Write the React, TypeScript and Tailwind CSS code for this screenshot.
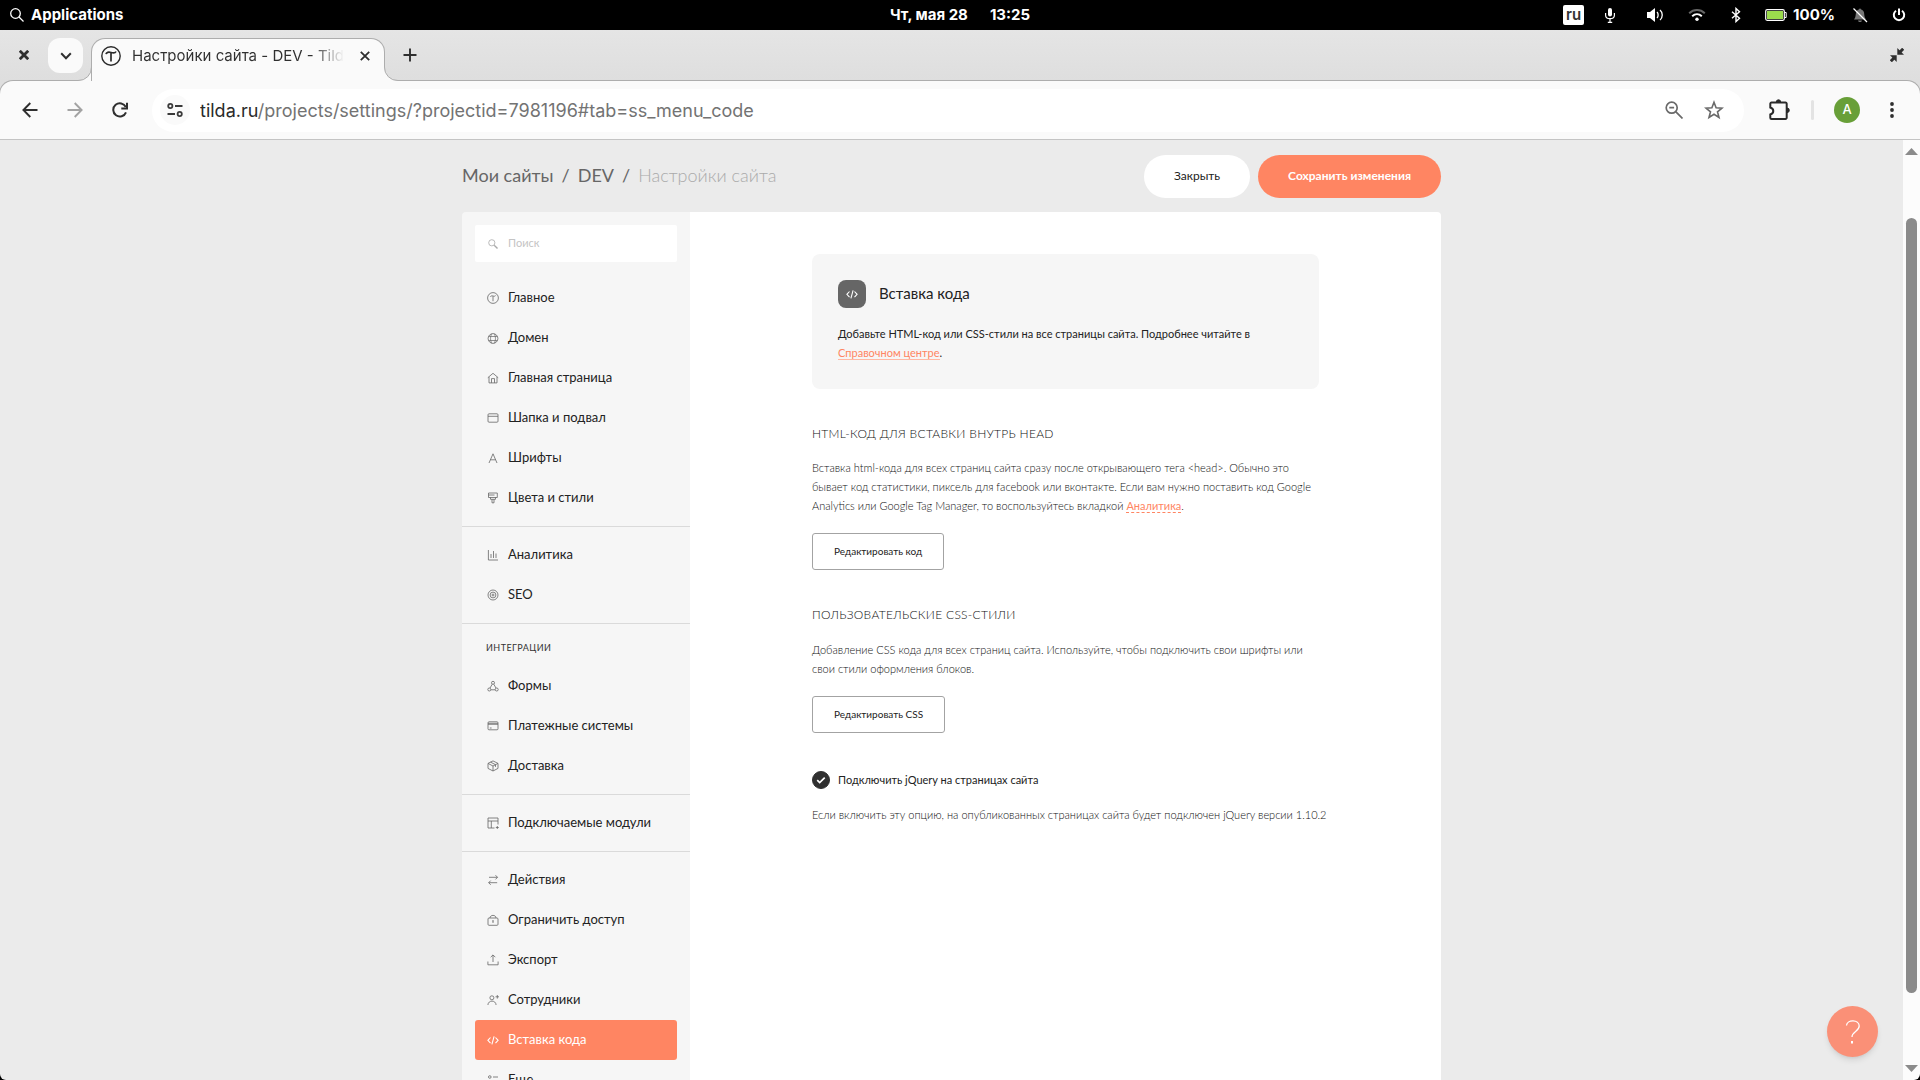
import type { ReactNode } from "react"
import clsx from "clsx"

type IconProps = { className?: string; children: ReactNode }

// Thin outline icons used by the settings menu, 12x12 grid
function MenuIcon({ className, children }: IconProps) {
  return (
    <svg viewBox="0 0 12 12" className={clsx("h-3 w-3 shrink-0", className)} fill="none" stroke="currentColor" strokeWidth="0.8" aria-hidden="true">
      {children}
    </svg>
  )
}

const codeShape = (
  <g strokeWidth="1.1">
    <path d="M3.5 3.500 .9 6.300l2.600 2.800M8.500 3.500l2.600 2.800-2.600 2.800" />
    <path d="M7.100 2.300 4.900 10.300" />
  </g>
)

const icons = {
  main: (
    <>
      <circle cx="6" cy="6" r="5.4" />
      <path d="M3.400 4.900c.3-1 1.300-1.300 2.600-.9s2.200.3 2.600-.5M6 4.200v5" />
    </>
  ),
  domain: (
    <>
      <circle cx="6" cy="6.500" r="4.900" />
      <path d="M4.500 1.900c-1.300 3-1.300 6.200 0 9.200M7.500 1.900c1.300 3 1.300 6.200 0 9.200M1.600 4.500h8.800M1.600 8.500h8.800" strokeWidth="0.700" />
    </>
  ),
  home: (
    <>
      <path d="M.8 5.700 6 1.300l5.200 4.400M2 5v5.900h8V5" />
      <path d="M4.500 10.900V6.600h3v4.300" />
    </>
  ),
  header: (
    <>
      <rect x="1" y="1.800" width="10" height="8.400" rx="1" />
      <path d="M1 4.300h10" />
    </>
  ),
  fonts: <path d="M2 11 6 1.800 10 11M3.500 7.800h5" />,
  colors: (
    <>
      <path d="M1.500 1h8.800v4.500H1.500zM1.500 3h6" />
      <path d="M3.500 5.500v1.800h5V5.500M5 7.300v3.500h2V7.300" />
    </>
  ),
  analytics: <path d="M1.400 1v10H11M4 9V5M6.500 9V2M9 9V4.500" />,
  seo: (
    <>
      <circle cx="6" cy="6" r="5" />
      <circle cx="6" cy="6" r="2.900" />
      <circle cx="6" cy="6" r="1" />
    </>
  ),
  forms: (
    <>
      <circle cx="6" cy="2.800" r="1.500" />
      <circle cx="2.300" cy="9.500" r="1.500" />
      <circle cx="9.700" cy="9.500" r="1.500" />
      <path d="M5.200 4.200 3 8.100M6.800 4.200 9 8.100M3.800 9.800h4.400" />
    </>
  ),
  payments: (
    <>
      <rect x="1" y="1.800" width="10" height="8" rx="1" />
      <path d="M1 3.300h10M1 4.300h10M2.800 8h1.800" />
    </>
  ),
  delivery: (
    <>
      <path d="M6 .9 11 3.400v5L6 11 1 8.400v-5zM1 3.400 6 6l5-2.600M6 6v5" />
      <path d="M3.500 2.100 8.500 4.700v2.200" />
    </>
  ),
  modules: (
    <>
      <path d="M11 7.500V1H1v10h6.500M1 4h10M4.300 4v7" />
      <path d="M10.300 9v3M8.800 10.500h3" />
    </>
  ),
  actions: <path d="M2 3.300h8.500M8.500 1.200l2 2.100-2 2.100M10.200 8.700H1.700M3.700 6.600l-2 2.100 2 2.100" />,
  access: (
    <>
      <rect x="1" y="4" width="10" height="7.300" rx="1" />
      <path d="M3 4c0-3.500 6-3.500 6 0M6 6.500v2.500M5.300 6.900h1.400" />
    </>
  ),
  exportSite: <path d="M.9 7.500v3.300h10.200V7.500M6 8V1M3.700 3.200 6 .9l2.300 2.300" />,
  staff: (
    <>
      <circle cx="4.900" cy="3.800" r="2" />
      <path d="M.9 11c.3-5.200 7.900-5.200 8.200 0M10.300 1v3.600M8.500 2.800h3.600" />
    </>
  ),
  code: codeShape,
  more: (
    <>
      <circle cx="2.800" cy="3" r="1.300" />
      <path d="M6 3h5M1 8.500h5" />
      <circle cx="9" cy="8.500" r="1.300" />
    </>
  ),
}

type MenuItem = { label: string; icon: keyof typeof icons; active?: boolean }
type MenuGroup = { title?: string; items: MenuItem[] }

const menu: MenuGroup[] = [
  {
    items: [
      { label: "Главное", icon: "main" },
      { label: "Домен", icon: "domain" },
      { label: "Главная страница", icon: "home" },
      { label: "Шапка и подвал", icon: "header" },
      { label: "Шрифты", icon: "fonts" },
      { label: "Цвета и стили", icon: "colors" },
    ],
  },
  {
    items: [
      { label: "Аналитика", icon: "analytics" },
      { label: "SEO", icon: "seo" },
    ],
  },
  {
    title: "Интеграции",
    items: [
      { label: "Формы", icon: "forms" },
      { label: "Платежные системы", icon: "payments" },
      { label: "Доставка", icon: "delivery" },
    ],
  },
  { items: [{ label: "Подключаемые модули", icon: "modules" }] },
  {
    items: [
      { label: "Действия", icon: "actions" },
      { label: "Ограничить доступ", icon: "access" },
      { label: "Экспорт", icon: "exportSite" },
      { label: "Сотрудники", icon: "staff" },
      { label: "Вставка кода", icon: "code", active: true },
      { label: "Еще", icon: "more" },
    ],
  },
]

function SystemBar() {
  return (
    <header className="grid h-[30px] shrink-0 grid-cols-[1fr_auto_1fr] items-center bg-black text-[15px] font-bold text-white">
      <button className="flex items-center gap-[7px] pl-[10px]">
        <svg viewBox="0 0 14 14" className="h-[14px] w-[14px]" fill="none" stroke="currentColor" strokeWidth="1.300" aria-hidden="true">
          <circle cx="5.500" cy="5.500" r="4.800" />
          <path d="m9 9 4.500 4.500" />
        </svg>
        Applications
      </button>
      <div className="flex gap-[22px]">
        <span>Чт, мая 28</span>
        <span>13:25</span>
      </div>
      <div className="flex items-center justify-end pr-[14px]">
        <span className="mr-[18px] flex h-5 w-[21px] items-center justify-center rounded-xs bg-white font-semibold text-[#333]">ru</span>
        <svg viewBox="0 0 16 16" className="mr-7 h-4 w-4" fill="none" stroke="white" aria-hidden="true">
          <rect x="6" y="1" width="4" height="8.500" rx="2" fill="white" stroke="none" />
          <path d="M3.600 6v2.200c0 4.600 8.800 4.600 8.800 0V6M8 11.500V15M5.800 15.300h4.400" strokeWidth="1.200" />
        </svg>
        <svg viewBox="0 0 18 16" className="mr-6 h-4 w-[18px]" fill="none" stroke="white" aria-hidden="true">
          <path d="M1 5h3l5-4v14l-5-4H1z" fill="white" stroke="none" />
          <path d="M11 5c1.500 1.500 1.500 4.500 0 6M14 3c3 2.500 3 7.500 0 10" strokeWidth="1.300" />
        </svg>
        <svg viewBox="0 0 18 16" className="mr-[22px] h-4 w-[18px]" fill="none" stroke="white" strokeWidth="2" aria-hidden="true">
          <path d="M1.200 6.200c4.500-4.200 11.100-4.200 15.600 0" opacity="0.400" />
          <path d="M4.200 9.200c2.800-2.500 6.800-2.500 9.600 0" />
          <circle cx="9" cy="12.300" r="1.700" fill="white" stroke="none" />
        </svg>
        <svg viewBox="0 0 16 16" className="mr-[21px] h-4 w-4" fill="none" stroke="white" strokeWidth="1.400" aria-hidden="true">
          <path d="m4 4.800 7.500 6.400L8 14.500v-13l3.500 3.300L4 11.200" />
        </svg>
        <svg viewBox="0 0 22 12" className="mr-[6px] h-3 w-[22px]" aria-hidden="true">
          <rect x="0.700" y="0.700" width="18.600" height="10.600" rx="1.500" fill="none" stroke="white" strokeWidth="1.200" />
          <rect x="2" y="2" width="16" height="8" fill="#9bdb4d" />
          <path d="M19.500 3.500h1.700v5h-1.700" fill="none" stroke="white" />
        </svg>
        <span>100%</span>
        <svg viewBox="0 0 16 16" className="ml-[17px] mr-6 h-4 w-4" aria-hidden="true">
          <path d="M2 12.500c2-2 1.500-5 2-7 .5-1.800 1.700-2.800 3-3 .2-1.500 1.800-1.500 2 0 1.300.2 2.500 1.200 3 3 .5 2 0 5 2 7zM6 13.500h4c-.5 2-3.500 2-4 0z" fill="#777" />
          <path d="M1.500 1.500 15 15" stroke="white" strokeWidth="1.300" />
        </svg>
        <svg viewBox="0 0 14 14" className="h-[14px] w-[14px]" fill="none" stroke="white" strokeWidth="2" aria-hidden="true">
          <path d="M4 2.700a5.200 5.200 0 1 0 6 0M7 .5v6.500" />
        </svg>
      </div>
    </header>
  )
}

function Cross({ bold }: { bold?: boolean }) {
  return (
    <svg viewBox="0 0 10 10" className="h-[10px] w-[10px]" stroke="#2f2f2f" strokeWidth={bold ? 2.8 : 1.8} aria-hidden="true">
      <path d="m.8.8 8.400 8.400M9.200.8.800 9.200" />
    </svg>
  )
}

function TabStrip() {
  return (
    <div className="flex h-[50px] shrink-0 bg-linear-to-b from-[#e5e5e5] to-[#dedede]">
      <button aria-label="Закрыть окно" className="flex w-12 items-center justify-center">
        <Cross bold />
      </button>
      <button aria-label="Поиск вкладок" className="mt-2 flex h-[35px] w-[35px] items-center justify-center rounded-xl bg-[#fafafa]">
        <svg viewBox="0 0 12 8" className="h-2 w-3" fill="none" stroke="#2f2f2f" strokeWidth="2" aria-hidden="true">
          <path d="m1.200 1.300 4.800 4.900 4.800-4.900" />
        </svg>
      </button>
      <div className="relative z-10 -mb-px -ml-[5px] flex items-end">
        <svg viewBox="0 0 14 14" className="-mr-px h-[14px] w-[14px]" aria-hidden="true">
          <path d="M0 13.500A13 13 0 0 0 13.500 0H14v14H0z" fill="#fafafa" />
          <path d="M0 13.500A13 13 0 0 0 13.500 0" fill="none" stroke="#adadad" />
        </svg>
        <div className="flex h-[43px] w-[294px] items-center rounded-t-[14px] border border-b-0 border-[#adadad] bg-[#fafafa] pb-2 pl-[9px] pr-[14px]">
          <svg viewBox="0 0 20 20" className="mr-[11px] h-5 w-5 shrink-0" fill="none" stroke="#2a2a2a" aria-hidden="true">
            <circle cx="10" cy="10" r="9.200" strokeWidth="1.400" />
            <path d="M5 8.200c.4-2 2.600-2.400 5-1.700s4.300.6 5-1M10 6.700v8.800" strokeWidth="1.700" />
          </svg>
          <span className="w-[212px] overflow-hidden whitespace-nowrap bg-linear-to-r from-[#2f2f2f] from-85% to-transparent bg-clip-text text-[15px] text-transparent">
            Настройки сайта - DEV - Tilda
          </span>
          <button aria-label="Закрыть вкладку" className="ml-auto">
            <Cross />
          </button>
        </div>
        <svg viewBox="0 0 14 14" className="-ml-px h-[14px] w-[14px]" aria-hidden="true">
          <path d="M14 13.500A13 13 0 0 1 .5 0H0v14h14z" fill="#fafafa" />
          <path d="M14 13.500A13 13 0 0 1 .5 0" fill="none" stroke="#adadad" />
        </svg>
      </div>
      <button aria-label="Новая вкладка" className="flex w-6 items-center justify-center">
        <svg viewBox="0 0 14 14" className="h-[14px] w-[14px]" stroke="#2f2f2f" strokeWidth="1.900" aria-hidden="true">
          <path d="M7 .5v13M.5 7h13" />
        </svg>
      </button>
      <button aria-label="Выйти из полноэкранного режима" className="ml-auto mr-4 flex items-center">
        <svg viewBox="0 0 14 14" className="h-[14px] w-[14px]" fill="#2f2f2f" stroke="#2f2f2f" strokeWidth="3" aria-hidden="true">
          <path d="M7.300 0v6.700H14z" stroke="none" />
          <path d="M9 5 13.200.8M5 9 .8 13.200" />
          <path d="M6.700 14V7.300H0z" stroke="none" />
        </svg>
      </button>
    </div>
  )
}

function Toolbar() {
  return (
    <div className="-mx-px flex h-[60px] shrink-0 items-center rounded-t-[14px] border border-b-[#c4c4c4] border-t-[#adadad] border-x-[#adadad] bg-[#fafafa]">
      <div className="flex items-center gap-[29px] pl-[22px] pr-[24px]">
        <button aria-label="Назад">
          <svg viewBox="0 0 16 16" className="h-4 w-4" fill="none" stroke="#2f2f2f" strokeWidth="1.900" aria-hidden="true">
            <path d="M15.500 8H1.500M8.300 1 1.400 8l6.900 7" />
          </svg>
        </button>
        <button aria-label="Вперед" disabled>
          <svg viewBox="0 0 16 16" className="h-4 w-4" fill="none" stroke="#a3a3a3" strokeWidth="1.900" aria-hidden="true">
            <path d="M.5 8h14M7.700 1l6.900 7-6.900 7" />
          </svg>
        </button>
        <button aria-label="Обновить">
          <svg viewBox="0 0 16 16" className="h-4 w-4" fill="none" stroke="#2f2f2f" strokeWidth="2" aria-hidden="true">
            <path d="M14 10.300A6.600 6.600 0 1 1 13.800 5" />
            <path d="M15 .8V6.400H9.300" />
          </svg>
        </button>
      </div>
      <div className="flex h-[43px] flex-1 items-center rounded-full bg-white pl-2 pr-5">
        <button aria-label="Сведения о сайте" className="mr-[10px] flex h-[30px] w-[30px] items-center justify-center rounded-full bg-[#fafafa]">
          <svg viewBox="0 0 16 14" className="h-[14px] w-4" fill="none" stroke="#3a3a3a" strokeWidth="1.800" aria-hidden="true">
            <circle cx="3.300" cy="3" r="2.100" />
            <path d="M8 3h7.500M.5 11H8" />
            <circle cx="12.700" cy="11" r="2.100" />
          </svg>
        </button>
        <div className="flex-1 truncate text-[18px] text-[#737373]">
          <span className="text-[#2a2a2a]">tilda.ru</span>/projects/settings/?projectid=7981196#tab=ss_menu_code
        </div>
        <button aria-label="Масштаб" className="mr-[21px]">
          <svg viewBox="0 0 18 18" className="h-[18px] w-[18px]" fill="none" stroke="#6a6a6a" strokeWidth="1.700" aria-hidden="true">
            <circle cx="6.700" cy="6.700" r="5.500" />
            <path d="m10.700 10.700 6.800 6.800M4.300 6.700h4.800" />
          </svg>
        </button>
        <button aria-label="Добавить в закладки">
          <svg viewBox="0 0 20 20" className="h-5 w-5" fill="none" stroke="#6a6a6a" strokeWidth="1.600" aria-hidden="true">
            <path d="m10 2.300 2.100 5.400 5.900.4-4.500 3.700 1.500 5.700-5-3.200-5 3.200 1.500-5.700L2 8.100l5.900-.4z" />
          </svg>
        </button>
      </div>
      <div className="flex items-center pr-[26px]">
        <button aria-label="Расширения" className="ml-6">
          <svg viewBox="0 0 22 22" className="h-[22px] w-[22px]" aria-hidden="true">
            <path d="M3.500 3.500h14a1.200 1.200 0 0 1 1.200 1.200v14a1.200 1.200 0 0 1-1.200 1.200h-14a1.200 1.200 0 0 1-1.200-1.200v-3.200c4-1.500 4-5.500 0-7V4.700a1.200 1.200 0 0 1 1.200-1.200z" fill="none" stroke="#2a2a2a" strokeWidth="2" />
            <path d="M8.300 3a2.200 2.200 0 0 1 4.400 0zM19 9a2.300 2.300 0 0 1 0 4.600z" fill="#2a2a2a" stroke="#2a2a2a" />
          </svg>
        </button>
        <span className="ml-[21px] h-5 w-[3px] rounded-full bg-[#e3e3e3]" />
        <button className="ml-5 flex h-[26px] w-[26px] items-center justify-center rounded-full bg-[#689f38] text-[13px] font-medium text-white">A</button>
        <button aria-label="Меню" className="ml-[30px]">
          <svg viewBox="0 0 4 16" className="h-4 w-1" fill="#2f2f2f" aria-hidden="true">
            <circle cx="2" cy="2" r="1.900" />
            <circle cx="2" cy="8" r="1.900" />
            <circle cx="2" cy="14" r="1.900" />
          </svg>
        </button>
      </div>
    </div>
  )
}

function PageHeader() {
  return (
    <div className="flex items-center justify-between pb-[14px] pt-[15px]">
      <nav className="flex items-center gap-2 pb-[2px] text-[18px] text-[#666]">
        <a href="#sites">Мои сайты</a>
        <span>/</span>
        <a href="#dev">DEV</a>
        <span>/</span>
        <span className="font-light text-[#aaa]">Настройки сайта</span>
      </nav>
      <div className="flex gap-2">
        <button className="h-[43px] rounded-full bg-white px-[30px] pb-px text-[12px] text-[#222]">Закрыть</button>
        <button className="h-[43px] rounded-full bg-[#ff8562] px-[30px] pb-px text-[12px] font-bold text-white">Сохранить изменения</button>
      </div>
    </div>
  )
}

function Sidebar() {
  return (
    <aside className="w-[228px] shrink-0 rounded-tl bg-[#f6f6f6]">
      <div className="px-[13px] pb-2 pt-[13px]">
        <label className="flex h-[37px] items-center gap-[9px] rounded-xs bg-white px-3">
          <MenuIcon className="text-[#aaa]">
            <circle cx="4.800" cy="4.800" r="3.100" />
            <path d="m7.200 7.200 3.300 3.300" strokeWidth="1.400" />
          </MenuIcon>
          <input type="text" aria-label="Поиск" placeholder="Поиск" className="w-full min-w-0 text-[11px] outline-none placeholder:text-[#c4c4c4]" />
        </label>
      </div>
      <nav>
        {menu.map((group, i) => (
          <div key={i} className="border-b border-[#dadada] py-2 last:border-0">
            {group.title && <div className="px-6 pb-[10px] pt-2 text-[9px] leading-4 tracking-wider text-[#333] uppercase">{group.title}</div>}
            <ul className="px-[13px]">
              {group.items.map((item) => (
                <li key={item.label}>
                  <a
                    href={"#" + item.icon}
                    className={clsx(
                      "flex h-10 items-center gap-[9px] rounded-[3px] px-3 text-[13px]",
                      item.active ? "bg-[#ff8562] text-white" : "text-[#222]"
                    )}
                  >
                    <MenuIcon className={item.active ? "text-white" : "text-[#666]"}>{icons[item.icon]}</MenuIcon>
                    {item.label}
                  </a>
                </li>
              ))}
            </ul>
          </div>
        ))}
      </nav>
    </aside>
  )
}

function OutlineButton({ children }: { children: ReactNode }) {
  return <button className="h-[37px] rounded-[3px] border border-[#a3a3a3] px-[21px] text-[10px] text-[#222]">{children}</button>
}

function Content() {
  return (
    <section className="flex-1 rounded-tr bg-white pt-[42px]">
      <div className="mx-auto max-w-[507px] text-[11px] leading-[19px] text-[#111]">
        <div className="rounded-lg bg-[#f6f6f6] px-[26px] pb-[27px] pt-[26px] text-[#222]">
          <div className="flex items-start gap-[13px]">
            <span className="flex h-7 w-7 items-center justify-center rounded-lg bg-[#666] text-white">
              <MenuIcon>{codeShape}</MenuIcon>
            </span>
            <h1 className="text-[15px] leading-[26px]">Вставка кода</h1>
          </div>
          <p className="pt-4">
            Добавьте HTML-код или CSS-стили на все страницы сайта. Подробнее читайте в{" "}
            <a href="#help" className="border-b border-[#ffb8a3] text-[#ff8562]">Справочном центре</a>.
          </p>
        </div>

        <h2 className="pt-[35px] text-[12px] font-light tracking-wide uppercase">HTML-код для вставки внутрь HEAD</h2>
        <p className="pb-[18px] pt-[15px] font-light">
          Вставка html-кода для всех страниц сайта сразу после открывающего тега &lt;head&gt;. Обычно это бывает код статистики, пиксель для facebook или вконтакте. Если вам нужно поставить код Google Analytics или Google Tag Manager, то воспользуйтесь вкладкой{" "}
          <a href="#analytics" className="border-b border-dashed border-[#ff8562] font-normal text-[#ff8562]">Аналитика</a>.
        </p>
        <OutlineButton>Редактировать код</OutlineButton>

        <h2 className="pt-[35px] text-[12px] font-light tracking-wide uppercase">Пользовательские CSS-стили</h2>
        <p className="pb-[18px] pt-4 font-light">
          Добавление CSS кода для всех страниц сайта. Используйте, чтобы подключить свои шрифты или свои стили оформления блоков.
        </p>
        <OutlineButton>Редактировать CSS</OutlineButton>

        <div className="flex items-center gap-2 pb-4 pt-[37px]">
          <span className="grid h-[18px] w-[18px] place-items-center">
            <input id="jquery" type="checkbox" defaultChecked className="col-start-1 row-start-1 h-[18px] w-[18px] appearance-none rounded-full border border-[#303030] checked:bg-[#303030]" />
            <svg viewBox="0 0 10 10" className="pointer-events-none col-start-1 row-start-1 h-[10px] w-[10px]" fill="none" stroke="white" strokeWidth="1.700" aria-hidden="true">
              <path d="m1.200 5.200 2.500 2.400 5-5" />
            </svg>
          </span>
          <label htmlFor="jquery" className="text-[#222]">Подключить jQuery на страницах сайта</label>
        </div>
        <p className="whitespace-nowrap font-light">Если включить эту опцию, на опубликованных страницах сайта будет подключен jQuery версии 1.10.2</p>
      </div>
    </section>
  )
}

function Scrollbar() {
  return (
    <div className="flex w-[17px] shrink-0 flex-col items-center bg-[#fcfcfc] py-2">
      <svg viewBox="0 0 13 7" className="h-[7px] w-[13px]" fill="#8b8b8b" aria-hidden="true">
        <path d="M0 7 6.500 0 13 7z" />
      </svg>
      <div className="mb-[72px] mt-[63px] w-[11px] flex-1 rounded-full bg-[#8b8b8b]" />
      <svg viewBox="0 0 13 7" className="h-[7px] w-[13px]" fill="#8b8b8b" aria-hidden="true">
        <path d="M0 0 6.500 7 13 0z" />
      </svg>
    </div>
  )
}

export default function App() {
  return (
    <div className="flex h-screen flex-col overflow-hidden bg-black font-['Inter','Noto_Sans',sans-serif]">
      <SystemBar />
      <div className="flex min-h-0 flex-1 flex-col overflow-hidden rounded-b-[6px]">
        <div className="flex shrink-0 flex-col bg-[#dedede]">
          <TabStrip />
          <Toolbar />
        </div>
        <div className="flex min-h-0 flex-1">
          <main className="min-w-0 flex-1 overflow-hidden bg-[#ebebeb] font-['Lato','Open_Sans',sans-serif]">
            <div className="mx-auto flex min-h-full max-w-[979px] flex-col">
              <PageHeader />
              <div className="flex flex-1">
                <Sidebar />
                <Content />
              </div>
            </div>
          </main>
          <Scrollbar />
        </div>
      </div>
      <button aria-label="Помощь" className="fixed bottom-[23px] right-[42px] flex h-[51px] w-[51px] items-center justify-center rounded-full bg-[#fa9077] shadow-md">
        <svg viewBox="0 0 16 24" className="h-6 w-4" fill="none" stroke="white" strokeWidth="1.300" aria-hidden="true">
          <path d="M1.500 5.500C2-.8 14.200-.8 14.200 6c0 5.500-7.200 5.500-7.200 11" />
          <path d="M7 21v2.500" strokeWidth="2" />
        </svg>
      </button>
    </div>
  )
}
